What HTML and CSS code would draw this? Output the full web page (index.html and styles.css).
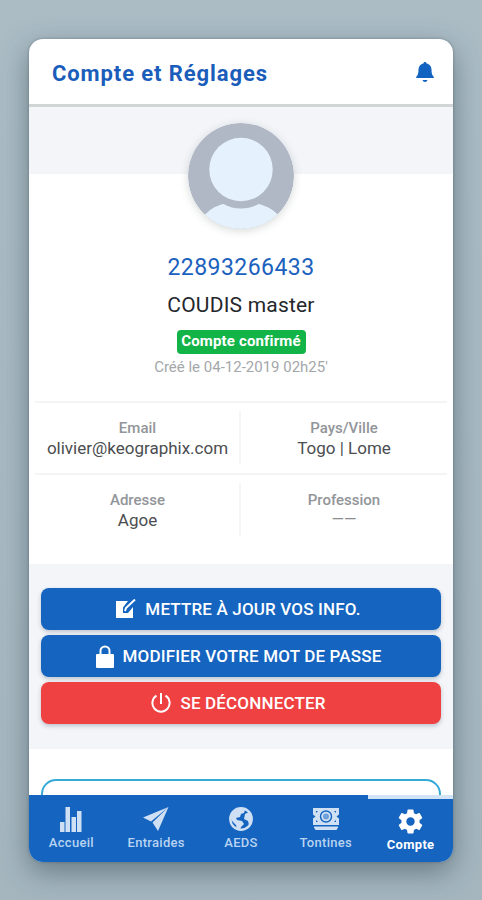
FILE: index.html
```html
<!DOCTYPE html>
<html lang="fr">
<head>
    <meta charset="UTF-8">
    <meta name="viewport" content="width=device-width, initial-scale=1.0">
    <title>Compte et Réglages</title>
    <link rel="stylesheet" href="styles.css">
</head>
<body>

    <div class="app">
        <header class="header">
            <h1>Compte et Réglages</h1>
            <svg class="bell" viewBox="0 0 18 20">
                <path d="M9 0c.8 0 1.300.5 1.400 1.200C13.600 2 15.500 4.500 15.500 7.500c0 4 .6 5.500 2.200 7.300.5.500.2 1.200-.5 1.200H.8c-.7 0-1-.7-.5-1.200C1.900 13 2.500 11.500 2.500 7.500c0-3 1.900-5.500 5.100-6.300C7.700.5 8.200 0 9 0z"/>
                <path d="M6.500 18h5c-.3 1.200-1.300 2-2.500 2s-2.200-.8-2.500-2z"/>
            </svg>
        </header>

        <main class="content">
            <div class="cover"></div>

            <!-- Profile -->
            <section class="profile">
                <svg class="avatar" viewBox="0 0 106 106">
                    <defs>
                        <clipPath id="round"><circle cx="53" cy="53" r="53"/></clipPath>
                    </defs>
                    <g clip-path="url(#round)">
                        <rect width="106" height="106" fill="#b0b8c5"/>
                        <path d="M16 93c5-6 11-10 19.500-12 5.500 3 11 4.500 17.500 4.500S65 84 70.500 81C79 83 86 87 91 93v13H16z" fill="#e6f1fe"/>
                        <circle cx="53" cy="46.500" r="31.700" fill="#e6f1fe"/>
                    </g>
                </svg>
                <div class="phone">22893266433</div>
                <div class="name">COUDIS master</div>
                <div class="badge">Compte confirmé</div>
                <div class="created">Créé le 04-12-2019 02h25'</div>
            </section>

            <section class="infos">
                <div class="info"><span class="label">Email</span><span class="value">olivier@keographix.com</span></div>
                <div class="info"><span class="label">Pays/Ville</span><span class="value">Togo | Lome</span></div>
                <div class="info"><span class="label">Adresse</span><span class="value">Agoe</span></div>
                <div class="info"><span class="label">Profession</span><span class="value dash">——</span></div>
            </section>

            <!-- Account actions -->
            <section class="actions">
                <button class="btn">
                    <svg width="20" height="20" viewBox="0 0 20 20">
                        <path d="M0 2h12L7 8.500V14h5l5-6v11H0z" fill="#fff"/>
                        <path d="M9 12l1-3L19 .5" fill="none" stroke="#fff" stroke-width="2"/>
                    </svg>
                    <span>METTRE À JOUR VOS INFO.</span>
                </button>
                <button class="btn">
                    <svg width="18" height="23" viewBox="0 0 18 23">
                        <rect y="9" width="18" height="14" rx="1" fill="#fff"/>
                        <path d="M4.500 10V6a4.500 4.500 0 0 1 9 0v4" fill="none" stroke="#fff" stroke-width="2"/>
                    </svg>
                    <span>MODIFIER VOTRE MOT DE PASSE</span>
                </button>
                <button class="btn logout">
                    <svg width="20" height="20" viewBox="0 0 20 20">
                        <path d="M5.500 2.700a8.600 8.600 0 1 0 9 0M10 0v11" fill="none" stroke="#fff" stroke-width="2"/>
                    </svg>
                    <span>SE DÉCONNECTER</span>
                </button>
            </section>

            <section class="more">
                <div class="panel"></div>
            </section>
        </main>

        <nav class="tabs">
            <a class="tab">
                <svg width="22" height="26" viewBox="0 0 22 26">
                    <path d="M0 16h4.500v10H0zM5.500 1H10v25H5.500zM11.500 11H16v15h-4.500zM17 5h4.500v21H17z"/>
                </svg>
                <span>Accueil</span>
            </a>
            <a class="tab">
                <svg width="26" height="24" viewBox="0 0 26 24">
                    <path d="M25.500 0L0 10.500l8 4zM25.500 0L9.500 15.500 15 24z"/>
                </svg>
                <span>Entraides</span>
            </a>
            <a class="tab">
                <svg width="24" height="24" viewBox="0 0 24 24">
                    <circle cx="12" cy="12" r="10.700" fill="none" stroke="#cfe0f5" stroke-width="2.400"/>
                    <path d="M2 8l4-5 6-2 4 2-1 3-3 1-1 3-4 1 1 2 5 1 2 3-3 3-1 3-3 0-1-5-3-3-3-4zM16 7l4-2 3 5v5l-3 3-1-4-4-2z"/>
                </svg>
                <span>AEDS</span>
            </a>
            <a class="tab">
                <svg width="26" height="22" viewBox="0 0 26 22">
                    <path fill-rule="evenodd" d="M0 0h26v17H0zM3 3v2l2-2zM21 3l2 2V3zM3 12v2h2zM23 12l-2 2h2zM13 2.300a6.200 6.200 0 1 0 0 12.400 6.200 6.200 0 0 0 0-12.400z"/>
                    <path d="M0 6.500l2.500 2L0 10.500zM26 6.500l-2.500 2 2.500 2z" fill="#1464c0"/>
                    <circle cx="13" cy="8.500" r="4.800"/>
                    <circle cx="13" cy="8.500" r="3" fill="#6f9fda"/>
                    <path d="M1 18.500h24v1L23.500 22h-21L1 19.500z"/>
                </svg>
                <span>Tontines</span>
            </a>
            <a class="tab active">
                <svg width="29" height="29" viewBox="0 0 24 24">
                    <path d="M19.430 12.980c.04-.32.07-.64.07-.98s-.03-.66-.07-.98l2.110-1.650c.19-.15.24-.42.12-.64l-2-3.460c-.12-.22-.39-.3-.61-.22l-2.490 1c-.52-.4-1.080-.73-1.690-.98l-.38-2.650A.49.49 0 0 0 14 2h-4c-.25 0-.46.18-.49.42l-.38 2.650c-.61.25-1.170.59-1.690.98l-2.490-1c-.23-.09-.49 0-.61.22l-2 3.460c-.13.22-.07.49.12.64l2.110 1.650c-.04.32-.07.65-.07.98s.03.66.07.98l-2.110 1.650c-.19.15-.24.42-.12.64l2 3.460c.12.22.39.3.61.22l2.490-1c.52.4 1.080.73 1.690.98l.38 2.650c.03.24.24.42.49.42h4c.25 0 .46-.18.49-.42l.38-2.650c.61-.25 1.170-.59 1.690-.98l2.490 1c.23.09.49 0 .61-.22l2-3.460c.12-.22.07-.49-.12-.64zM12 15.500a3.500 3.500 0 1 1 0-7 3.500 3.500 0 0 1 0 7z"/>
                </svg>
                <span>Compte</span>
            </a>
        </nav>
    </div>

</body>
</html>
```

FILE: styles.css
```css
* {
    box-sizing: border-box;
}
body {
    margin: 0;
    height: 900px;
    padding: 39px 29px 38px;
    overflow: hidden;
    font-family: Roboto, sans-serif;
    background: linear-gradient(#abbcc5, #a5b6bf);
}
.app {
    display: flex;
    flex-direction: column;
    height: 823px;
    border-radius: 14px;
    overflow: hidden;
    background-color: #fff;
    box-shadow: 0 10px 28px rgba(45, 65, 75, 0.5), 0 0 3px rgba(45, 65, 75, 0.4);
}
.header {
    flex: none;
    display: flex;
    justify-content: space-between;
    align-items: center;
    height: 68px;
    padding: 0 19px 0 23px;
    border-bottom: 3px solid #d2d5d5;
}
.header h1 {
    margin: 0;
    padding-top: 3px;
    font-size: 22px;
    font-weight: 700;
    letter-spacing: 0.9px;
    white-space: nowrap;
    color: #1b5dba;
}
.bell {
    width: 18px;
    height: 20px;
    fill: #1263c1;
}
.content {
    flex: 1;
    min-height: 0;
    overflow: hidden;
}
.cover {
    height: 67px;
    background-color: #f3f5f9;
}
.profile {
    display: flex;
    flex-direction: column;
    align-items: center;
    height: 278px;
    margin-top: -51px;
}
.avatar {
    flex: none;
    width: 106px;
    height: 106px;
    border-radius: 50%;
    box-shadow: 0 2px 9px rgba(60, 70, 70, 0.2);
}
.phone {
    margin-top: 25px;
    font-size: 23px;
    line-height: 28px;
    letter-spacing: 0.45px;
    color: #1b61bd;
}
.name {
    margin-top: 9px;
    font-size: 21px;
    line-height: 28px;
    letter-spacing: 0.2px;
    color: #25272c;
}
.badge {
    width: 129px;
    height: 24px;
    margin-top: 11px;
    border-radius: 4px;
    font-size: 15px;
    font-weight: 700;
    line-height: 23px;
    letter-spacing: 0.15px;
    text-align: center;
    white-space: nowrap;
    color: #fff;
    background-color: #12b347;
}
.created {
    margin-top: 4px;
    font-size: 15px;
    line-height: 18px;
    color: #a4a7aa;
}
.infos {
    display: grid;
    grid-template-columns: 1fr 1fr;
    grid-template-rows: 72px 72px;
    height: 163px;
    margin: 0 6px;
}
.info {
    position: relative;
    display: flex;
    flex-direction: column;
    align-items: center;
    padding-top: 15px;
    border-top: 2px solid #f4f4f5;
    white-space: nowrap;
}
.info:nth-child(odd) {
    padding-right: 1px;
}
.info:nth-child(odd)::after {
    content: "";
    position: absolute;
    top: 8px;
    right: 0;
    width: 2px;
    height: 53px;
    background-color: #f5f5f6;
}
.label {
    font-size: 15px;
    font-weight: 500;
    line-height: 20px;
    color: #929599;
}
.value {
    font-size: 17px;
    line-height: 20px;
    color: #4b4d50;
}
.dash {
    font-size: 16px;
    color: #8a8c8f;
}
.actions {
    display: flex;
    flex-direction: column;
    gap: 5px;
    height: 185px;
    padding: 24px 12px 0;
    background-color: #f3f5f8;
}
.btn {
    display: flex;
    justify-content: center;
    align-items: center;
    gap: 9px;
    height: 42px;
    padding: 0 5px 0 0;
    border: none;
    border-radius: 8px;
    font-family: inherit;
    font-size: 17px;
    font-weight: 500;
    letter-spacing: 0.16px;
    color: #fff;
    background-color: #1464c0;
    box-shadow: 0 2px 4px rgba(30, 50, 80, 0.25);
}
.btn svg {
    flex: none;
}
.logout {
    background-color: #ef4141;
}
.more {
    padding: 30px 12px 0;
}
.panel {
    height: 60px;
    border: 2px solid #35aad8;
    border-radius: 15px;
}
.tabs {
    flex: none;
    display: grid;
    grid-template-columns: repeat(5, 1fr);
    height: 67px;
    background-color: #1464c0;
}
.tab {
    display: flex;
    flex-direction: column;
    align-items: center;
    padding-top: 11px;
    font-size: 13px;
    font-weight: 500;
    line-height: 16px;
    letter-spacing: 0.3px;
    color: #b9d3f1;
    fill: #cfe0f5;
}
.tab svg {
    height: 26px;
}
.tab span {
    margin-top: 3px;
}
.tab.active {
    padding-top: 8px;
    border-top: 4px solid #d3e3f6;
    font-weight: 700;
    color: #fff;
    fill: #fff;
}
.tab.active svg {
    height: 29px;
}
.tab.active span {
    margin-top: 1px;
}
```
